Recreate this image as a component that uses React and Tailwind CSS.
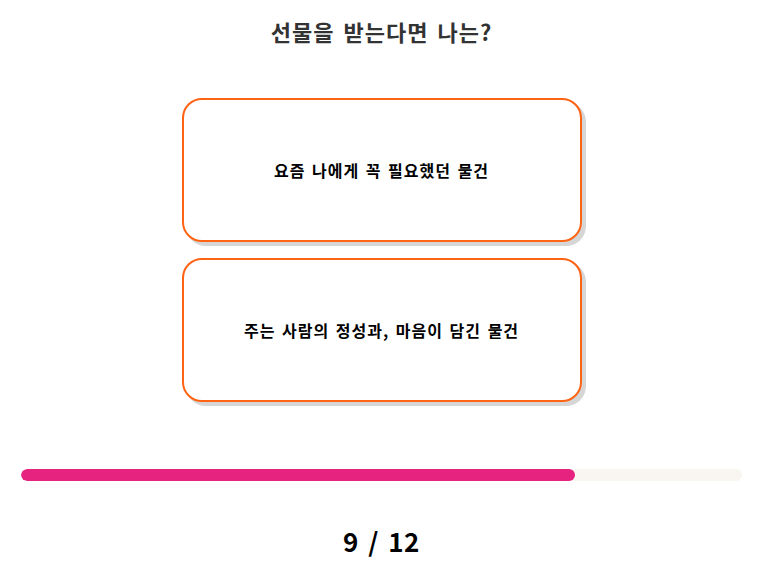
const font = { fontFamily: '"Noto Sans CJK KR", "Noto Sans", sans-serif' };

const answers = ["요즘 나에게 꼭 필요했던 물건", "주는 사람의 정성과, 마음이 담긴 물건"];

function AnswerCard({ label }) {
  return (
    <button
      type="button"
      className="flex h-[144px] w-[400px] items-center justify-center rounded-[20px] border-2 border-[#ff6314] bg-white text-[16px] font-bold tracking-[1px] [word-spacing:2px] text-black shadow-[4px_4px_0_#d6d6d6]"
    >
      {label}
    </button>
  );
}

export default function App() {
  const current = 9;
  const total = 12;
  return (
    <div className="flex min-h-[574px] flex-col items-center bg-white pr-[13px]" style={font}>
      <h1 className="mt-[15px] text-[22px] font-bold leading-[32px] tracking-[1px] [word-spacing:3px] text-[#333]">
        선물을 받는다면 나는?
      </h1>
      <div className="mt-[51px] flex flex-col gap-4">
        {answers.map((a) => (
          <AnswerCard key={a} label={a} />
        ))}
      </div>
      <div className="mt-[67px] h-3 w-[721px] overflow-hidden rounded-full bg-[#f9f6f1]">
        <div className="h-full w-[554px] rounded-full bg-[#e6237e]" />
      </div>
      <div className="mt-[42px] text-[26px] font-bold leading-[36px] tracking-[0.5px] [word-spacing:3px] text-black">
        {current} / {total}
      </div>
    </div>
  );
}
